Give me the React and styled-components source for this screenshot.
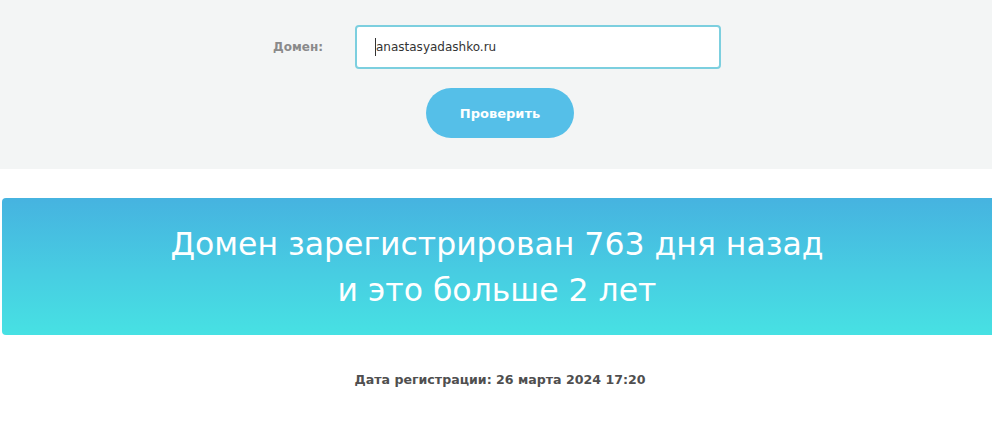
import React from 'react';
import styled, { createGlobalStyle } from 'styled-components';

const Global = createGlobalStyle`
  html, body { margin: 0; padding: 0; background: #fff; }
  body { font-family: "DejaVu Sans", "Noto Sans", sans-serif; }
`;

const Page = styled.div`
  width: 992px;
  display: flex;
  flex-direction: column;
`;

const Form = styled.section`
  background: #f3f5f5;
  height: 169px;
  box-sizing: border-box;
  padding-top: 25px;
  display: flex;
  flex-direction: column;
  align-items: center;
  gap: 19px;
`;

const Row = styled.div`
  display: flex;
  align-items: center;
  margin-left: 2px;
`;

const Label = styled.label`
  width: 82px;
  font-size: 12px;
  font-weight: bold;
  color: #8a8a8a;
`;

const Field = styled.div`
  position: relative;
`;

const Input = styled.input`
  width: 366px;
  height: 44px;
  box-sizing: border-box;
  border: 2px solid #7ccfdf;
  border-radius: 4px;
  background: #fff;
  padding: 0 19px;
  font-family: inherit;
  font-size: 12px;
  color: #333;
  outline: none;
`;

const Caret = styled.span`
  position: absolute;
  left: 20px;
  top: 13px;
  width: 1px;
  height: 18px;
  background: #333;
`;

const Button = styled.button`
  width: 148px;
  height: 50px;
  margin-left: 8px;
  border: 0;
  border-radius: 25px;
  background: #55bfe8;
  color: #fff;
  font-family: inherit;
  font-size: 13px;
  font-weight: bold;
  cursor: pointer;
`;

const Result = styled.div`
  margin: 29px 0 0 2px;
  height: 137px;
  border-radius: 4px 0 0 4px;
  background: linear-gradient(180deg, #46b3e0 0%, #47cde2 55%, #47e1e3 100%);
  display: flex;
  flex-direction: column;
  align-items: center;
  justify-content: center;
  color: #fff;
  font-size: 31.5px;
  line-height: 46px;
  text-align: center;
`;

const DateLine = styled.p`
  margin: 37px 0 0;
  padding-left: 8px;
  text-align: center;
  font-size: 12.6px;
  font-weight: bold;
  color: #4f4f4f;
`;

export default function App() {
  return (
    <Page>
      <Global />
      <Form>
        <Row>
          <Label htmlFor="domain">Домен:</Label>
          <Field>
            <Input id="domain" defaultValue="anastasyadashko.ru" />
            <Caret />
          </Field>
        </Row>
        <Button>Проверить</Button>
      </Form>
      <Result>
        <div>Домен зарегистрирован 763 дня назад</div>
        <div>и это больше 2 лет</div>
      </Result>
      <DateLine>Дата регистрации: 26 марта 2024 17:20</DateLine>
    </Page>
  );
}
